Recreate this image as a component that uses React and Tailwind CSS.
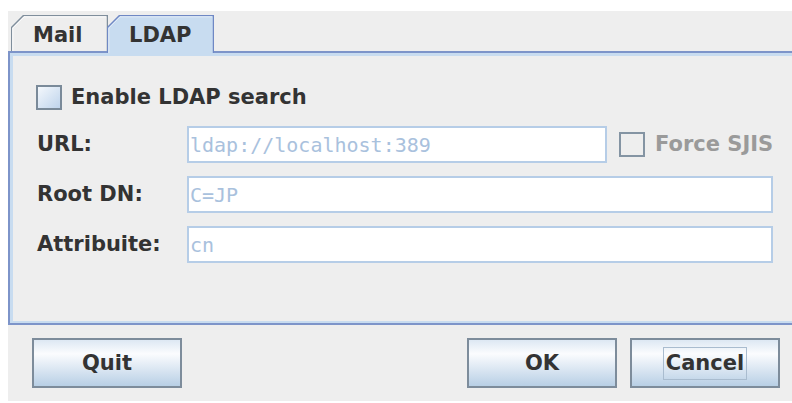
import React from "react";

// Slanted-corner tab of a Metal-style tabbed pane
function Tab({ label, selected, width, height, className = "" }) {
  const h = height;
  const w = width;
  return (
    <div
      className={`relative flex items-center pl-[22px] ${className}`}
      style={{ width: w, height: h }}
    >
      <svg
        className="absolute inset-0"
        width={w}
        height={h}
        viewBox={`0 0 ${w} ${h}`}
      >
        <path
          d={`M0.5 ${h} V12.5 L12.5 0.5 H${w - 0.5} V${h}`}
          fill={selected ? "#c8dcf0" : "#eeeeee"}
          stroke={selected ? "#6f88c4" : "#7f8e9c"}
          strokeWidth="1.5"
        />
        <path
          d={`M1.8 ${h} V13 L13 1.8 H${w - 1.8}`}
          fill="none"
          stroke={selected ? "#e6effa" : "#ffffff"}
          strokeWidth="1"
        />
      </svg>
      <span
        className={`relative leading-none ${selected ? "mt-[2px]" : "mt-[5px]"}`}
      >
        {label}
      </span>
    </div>
  );
}

function CheckBox({ disabled }) {
  return (
    <div
      className={`w-[26px] h-[25px] shrink-0 border-2 ${
        disabled
          ? "border-[#8494a3] bg-[#eeeeee]"
          : "border-[#7a8a99] bg-gradient-to-br from-[#f4f8fc] to-[#bfd4ec]"
      }`}
    />
  );
}

function Field({ value, className = "" }) {
  return (
    <div
      className={`h-[37px] border-2 border-[#b6cde7] bg-white flex items-center pl-[1px] font-['DejaVu_Sans_Mono',monospace] font-normal text-[20px] text-[#a9c1dd] leading-none ${className}`}
    >
      {value}
    </div>
  );
}

function Button({ children, focused }) {
  return (
    <div className="w-[150px] h-[50px] border-2 border-[#7d8c9b] bg-gradient-to-b from-[#dde8f3] via-[#fbfcfe] via-30% to-[#b8cfe5] flex items-center justify-center">
      {focused ? (
        <span className="border border-[#a9bccf] px-[2px] h-[33px] flex items-center leading-none">
          {children}
        </span>
      ) : (
        <span className="leading-none">{children}</span>
      )}
    </div>
  );
}

export default function App() {
  return (
    <div className="w-[792px] h-[403px] bg-white pl-[8px] pt-[11px] pb-[2px] font-['DejaVu_Sans',sans-serif] font-bold text-[21px] text-[#333333] overflow-hidden">
      <div className="h-full bg-[#eeeeee] flex flex-col">
        {/* tab strip */}
        <div className="flex items-start pl-[3px] pt-[4px] h-[40px]">
          <Tab label="Mail" width={97} height={36} />
          <Tab
            label="LDAP"
            selected
            width={107}
            height={38}
            className="-ml-[1px] z-10"
          />
        </div>

        {/* tab content */}
        <div className="h-[274px] border-t-2 border-b-2 border-l-2 border-[#7d94c9] shadow-[inset_3px_3px_0_#c8dcf0,inset_0_-2px_0_#c8dcf0] pl-[27px] pr-[19px] pt-[32px] flex flex-col">
          <div className="h-[25px] flex items-center gap-[9px] -ml-[1px]">
            <CheckBox />
            <span className="leading-none whitespace-nowrap">Enable LDAP search</span>
          </div>

          <div className="mt-[16px] flex flex-col gap-[13px]">
            <div className="flex items-center">
              <span className="w-[150px] shrink-0 leading-none">URL:</span>
              <Field value="ldap://localhost:389" className="w-[420px] shrink-0" />
              <div className="ml-[12px] flex items-center gap-[10px] shrink-0">
                <CheckBox disabled />
                <span className="leading-none text-[#9a9a9a] whitespace-nowrap">
                  Force SJIS
                </span>
              </div>
            </div>
            <div className="flex items-center">
              <span className="w-[150px] shrink-0 leading-none">Root DN:</span>
              <Field value="C=JP" className="flex-1" />
            </div>
            <div className="flex items-center">
              <span className="w-[150px] shrink-0 leading-none">Attribuite:</span>
              <Field value="cn" className="flex-1" />
            </div>
          </div>
        </div>

        {/* dialog buttons */}
        <div className="mt-[13px] flex items-center pl-[24px] pr-[12px]">
          <Button>Quit</Button>
          <div className="ml-auto flex gap-[13px]">
            <Button>OK</Button>
            <Button focused>Cancel</Button>
          </div>
        </div>
      </div>
    </div>
  );
}
